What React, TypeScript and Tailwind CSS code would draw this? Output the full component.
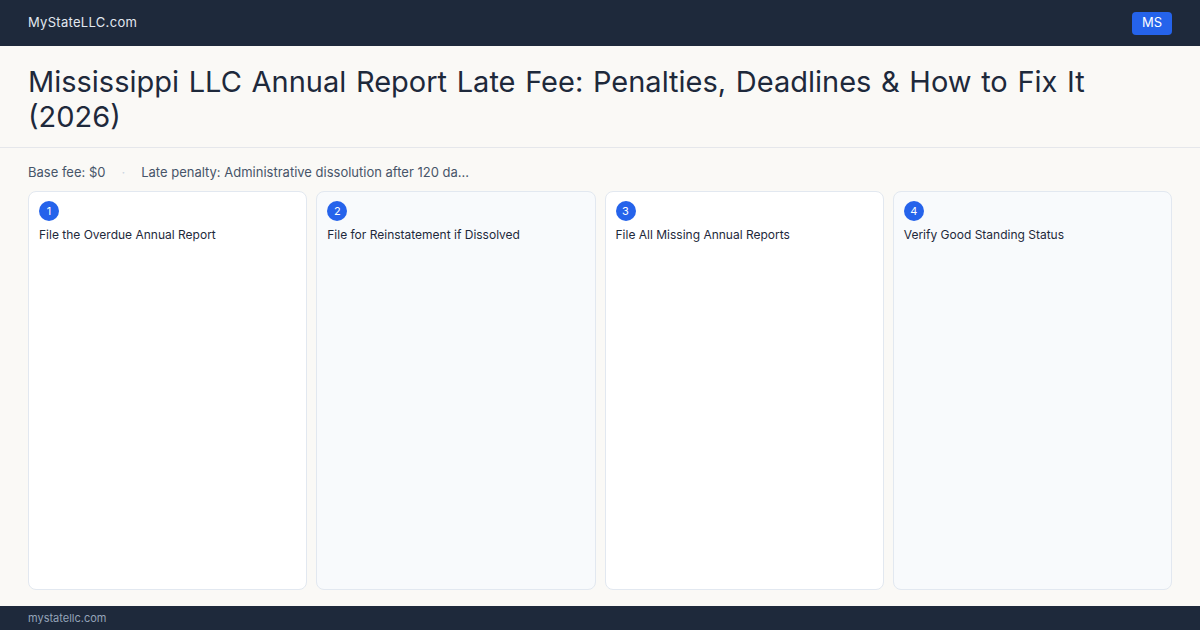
const steps = [
  { n: 1, title: "File the Overdue Annual Report", alt: false },
  { n: 2, title: "File for Reinstatement if Dissolved", alt: true },
  { n: 3, title: "File All Missing Annual Reports", alt: false },
  { n: 4, title: "Verify Good Standing Status", alt: true },
];

export default function App() {
  return (
    <div
      className="flex h-[630px] w-[1200px] flex-col overflow-hidden bg-[#faf9f6] text-[#1e293b]"
      style={{ fontFamily: "Inter, 'Noto Sans', sans-serif" }}
    >
      {/* top bar */}
      <header className="flex h-[46px] shrink-0 items-center justify-between bg-[#1e293b] px-[28px]">
        <span className="text-[13px] tracking-[0.3px] text-[#e2e8f0]">MyStateLLC.com</span>
        <span className="flex h-[23px] w-[40px] items-center justify-center rounded-[4px] bg-[#2563eb] text-[13px] text-white">
          MS
        </span>
      </header>

      {/* title */}
      <div className="shrink-0 border-b border-[#e5e7eb] px-[28px] pb-[13px] pt-[18px]">
        <h1 className="text-[29px] font-normal leading-[35px] text-[#1e293b] [word-spacing:1.5px]">
          Mississippi LLC Annual Report Late Fee: Penalties, Deadlines &amp; How to Fix It (2026)
        </h1>
      </div>

      {/* facts */}
      <div className="flex shrink-0 items-center gap-[16px] px-[28px] pt-[15px] text-[13px] leading-[18px] text-[#475569]">
        <span>Base fee: $0</span>
        <span className="text-[#cbd5e1]">·</span>
        <span>Late penalty: Administrative dissolution after 120 da...</span>
      </div>

      {/* steps */}
      <div className="grid min-h-0 flex-1 grid-cols-4 gap-[9px] px-[28px] pb-[16px] pt-[10px]">
        {steps.map((s) => (
          <div
            key={s.n}
            className={`rounded-[8px] border border-[#e2e8f0] px-[10px] pb-[10px] pt-[9px] ${s.alt ? "bg-[#f8fafc]" : "bg-white"}`}
          >
            <div className="flex h-[20px] w-[20px] items-center justify-center rounded-full bg-[#2563eb] text-[11px] text-white">
              {s.n}
            </div>
            <div className="mt-[6px] text-[12px] leading-[16px] text-[#1e293b]">{s.title}</div>
          </div>
        ))}
      </div>

      {/* footer */}
      <footer className="flex h-[24px] shrink-0 items-center bg-[#1e293b] px-[28px]">
        <span className="text-[11px] text-[#94a3b8]">mystatellc.com</span>
      </footer>
    </div>
  );
}
